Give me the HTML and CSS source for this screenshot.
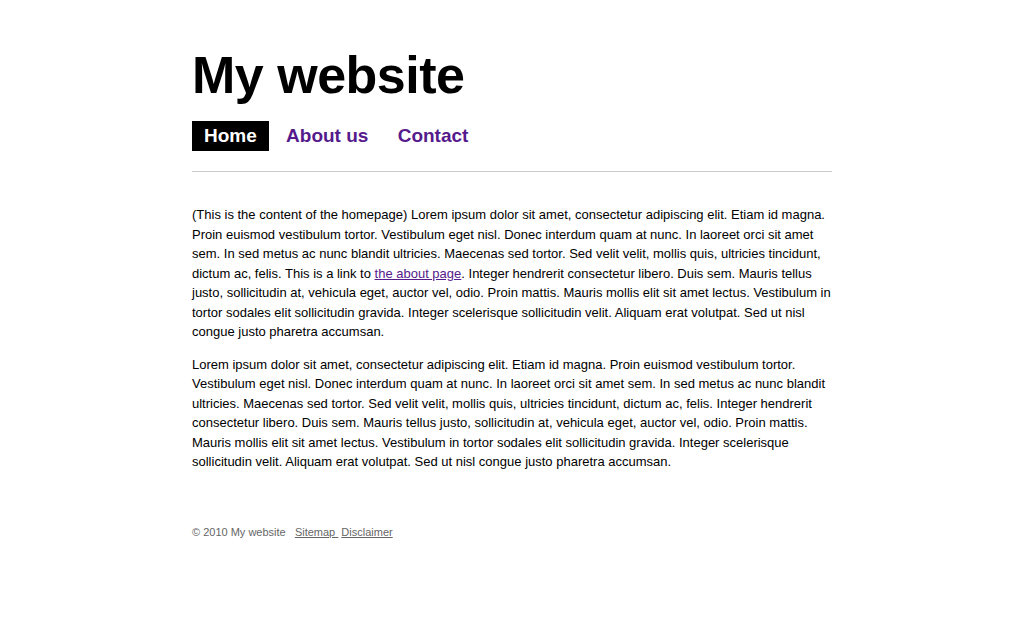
FILE: index.html
```html
<!DOCTYPE html>
<html lang="en">
<head>
<meta charset="utf-8">
<title>My website</title>
<link rel="stylesheet" href="styles.css">
</head>
<body>
<div class="page">
  <header class="header">
    <h1 class="title">My website</h1>
    <nav class="nav">
      <a class="nav-link active" href="#">Home</a>
      <a class="nav-link" href="#">About us</a>
      <a class="nav-link" href="#">Contact</a>
    </nav>
  </header>
  <main class="content">
    <p>(This is the content of the homepage) Lorem ipsum dolor sit amet, consectetur adipiscing elit. Etiam id magna. Proin euismod vestibulum tortor. Vestibulum eget nisl. Donec interdum quam at nunc. In laoreet orci sit amet sem. In sed metus ac nunc blandit ultricies. Maecenas sed tortor. Sed velit velit, mollis quis, ultricies tincidunt, dictum ac, felis. This is a link to <a class="text-link" href="#">the about page</a>. Integer hendrerit consectetur libero. Duis sem. Mauris tellus justo, sollicitudin at, vehicula eget, auctor vel, odio. Proin mattis. Mauris mollis elit sit amet lectus. Vestibulum in tortor sodales elit sollicitudin gravida. Integer scelerisque sollicitudin velit. Aliquam erat volutpat. Sed ut nisl congue justo pharetra accumsan.</p>
    <p>Lorem ipsum dolor sit amet, consectetur adipiscing elit. Etiam id magna. Proin euismod vestibulum tortor. Vestibulum eget nisl. Donec interdum quam at nunc. In laoreet orci sit amet sem. In sed metus ac nunc blandit ultricies. Maecenas sed tortor. Sed velit velit, mollis quis, ultricies tincidunt, dictum ac, felis. Integer hendrerit consectetur libero. Duis sem. Mauris tellus justo, sollicitudin at, vehicula eget, auctor vel, odio. Proin mattis. Mauris mollis elit sit amet lectus. Vestibulum in tortor sodales elit sollicitudin gravida. Integer scelerisque sollicitudin velit. Aliquam erat volutpat. Sed ut nisl congue justo pharetra accumsan.</p>
  </main>
  <footer class="footer">
    &copy; 2010 My website &nbsp;&nbsp;<a class="footer-link" href="#">Sitemap&nbsp;</a> <a class="footer-link" href="#">Disclaimer</a>
  </footer>
</div>
</body>
</html>
```

FILE: styles.css
```css
html, body {
  margin: 0;
  padding: 0;
  background: #fff;
}
body {
  font-family: "Liberation Sans", Arial, Helvetica, sans-serif;
  color: #000;
}
.page {
  width: 640px;
  margin: 0 auto;
  padding-top: 40px;
}
.title {
  margin: 0;
  font-size: 52px;
  line-height: 70px;
  font-weight: bold;
  letter-spacing: -0.5px;
}
.nav {
  margin-top: 11px;
  padding-bottom: 20px;
  border-bottom: 1px solid #ccc;
  font-size: 19px;
  font-weight: bold;
  line-height: 30px;
}
.nav-link {
  display: inline-block;
  padding: 0 12px;
  color: #551a8b;
  text-decoration: none;
}
.nav-link.active {
  background: #000;
  color: #fff;
}
.content {
  padding-top: 33px;
  font-size: 13px;
  line-height: 19.5px;
}
.content p {
  margin: 0 0 13px;
}
.text-link {
  color: #551a8b;
}
.footer {
  margin-top: 54px;
  font-size: 11px;
  color: #666;
}
.footer-link {
  color: #666;
}
```
